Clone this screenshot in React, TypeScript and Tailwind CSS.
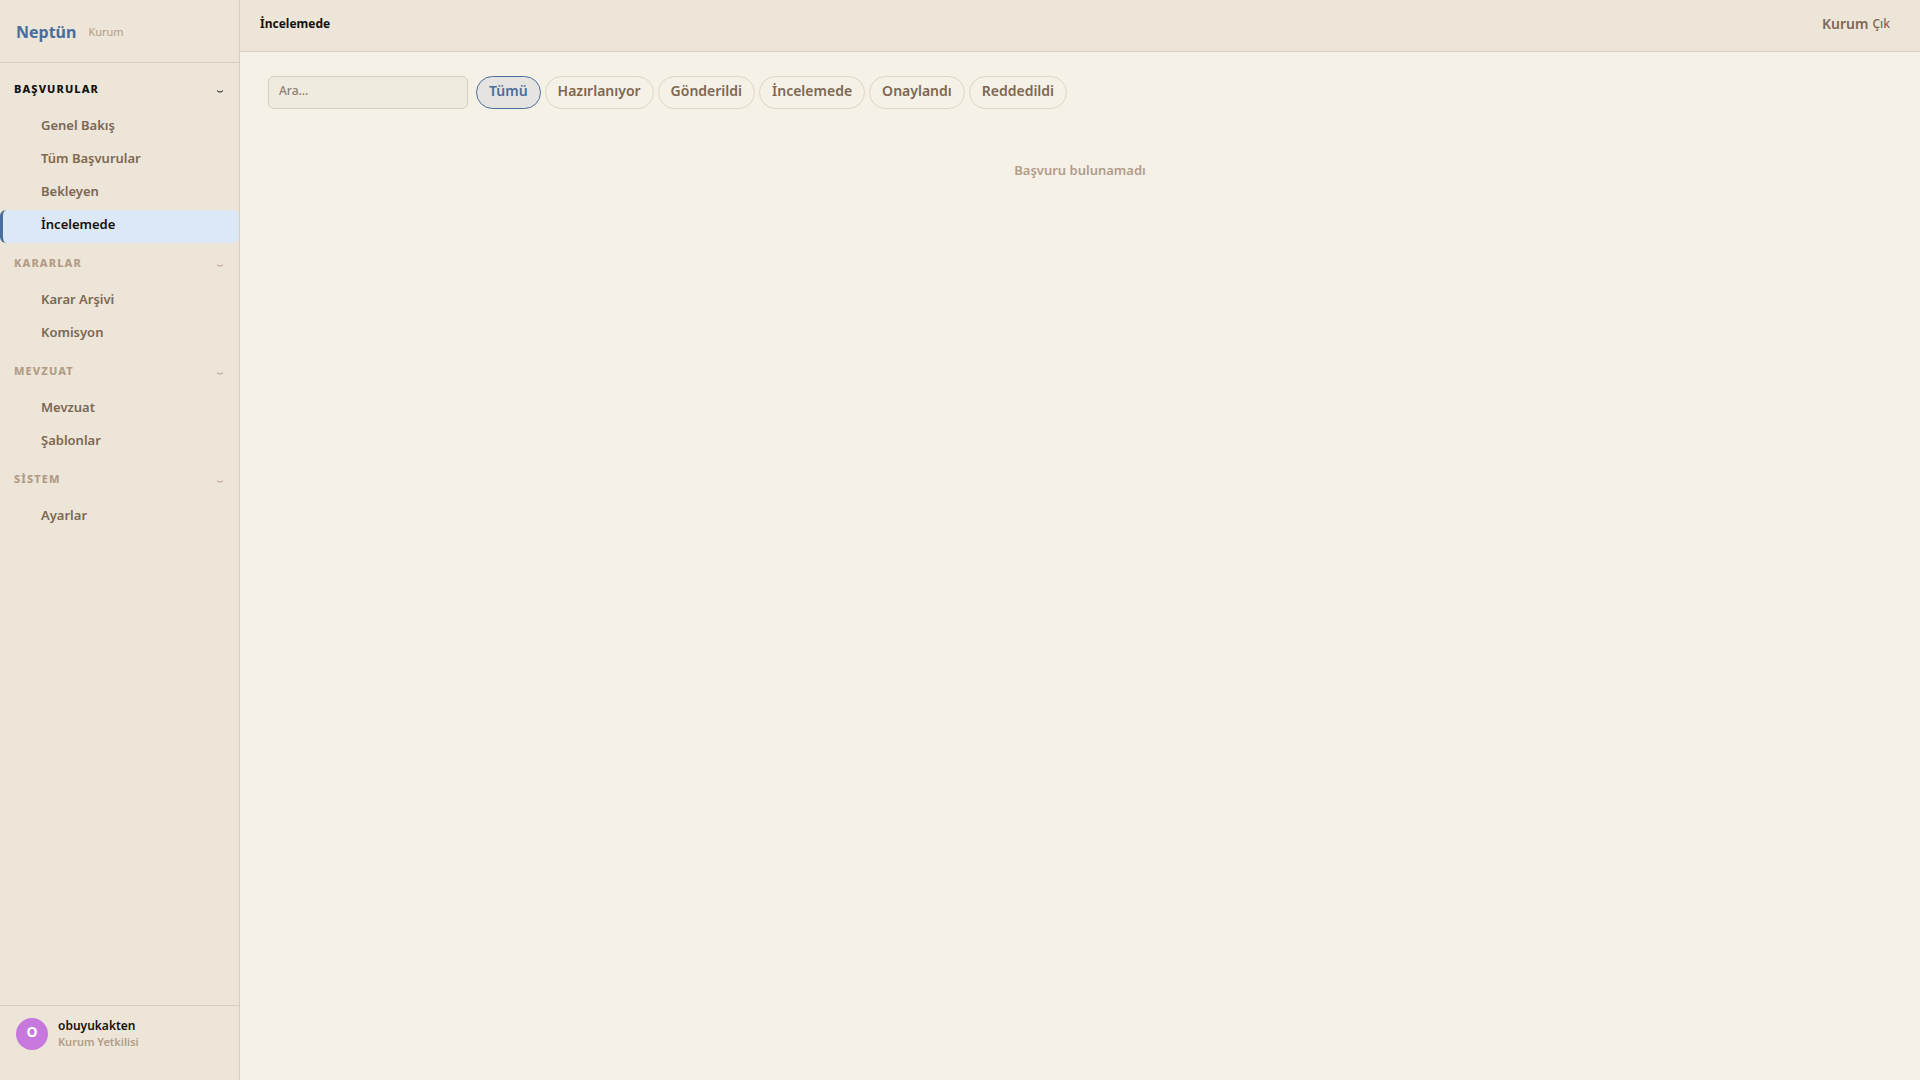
import React from 'react'

const sections = [
    { title: 'BAŞVURULAR', items: ['Genel Bakış', 'Tüm Başvurular', 'Bekleyen', 'İncelemede'] },
    { title: 'KARARLAR', items: ['Karar Arşivi', 'Komisyon'] },
    { title: 'MEVZUAT', items: ['Mevzuat', 'Şablonlar'] },
    { title: 'SİSTEM', items: ['Ayarlar'] },
]

const filters = ['Tümü', 'Hazırlanıyor', 'Gönderildi', 'İncelemede', 'Onaylandı', 'Reddedildi']

const active = 'İncelemede'

const Chevron = () => (
    <svg className='w-2 h-2 mt-1' viewBox='0 0 8 8' fill='none' stroke='currentColor' strokeWidth='1' aria-hidden='true'>
        <path d='M1 3.5 Q1.8 5 4 5 Q6.2 5 7 3.5' />
    </svg>
)

const Sidebar = () => {
    return (
        <aside className='flex flex-col w-60 shrink-0 bg-[#ece5d8] border-r border-[#d6cfc0]'>
            <div className='flex items-center gap-3 h-[63px] px-4 pt-0.5 border-b border-[#d6cfc0]'>
                <span className='text-base font-bold text-[#4a6d9c]'>Neptün</span>
                <span className='text-[11px] text-[#b39c86]'>Kurum</span>
            </div>
            <nav className='flex-1 pt-1.5'>
                {sections.map((section) => {
                    const open = section.items.includes(active)
                    return (
                        <div key={section.title}>
                            <button className={`flex justify-between items-center w-full h-[42px] pl-3.5 pr-[15px] pb-0.5 text-[11px] font-extrabold tracking-widest ${open ? 'text-[#15110c]' : 'text-[#b39c86]'}`}>
                                {section.title}
                                <Chevron />
                            </button>
                            {section.items.map((item) => (
                                <a
                                    key={item}
                                    href='#'
                                    className={`flex items-center h-[33px] pl-[38px] pb-1 border-l-3 rounded-md text-[13px] font-semibold ${item === active ? 'border-[#4a6d9c] bg-[#dce8f5] text-[#15110c]' : 'border-transparent text-[#7d6752]'}`}
                                >
                                    {item}
                                </a>
                            ))}
                        </div>
                    )
                })}
            </nav>
            <div className='flex items-start gap-2.5 h-[75px] px-4 pt-3 border-t border-[#d6cfc0]'>
                <div className='flex justify-center items-center size-8 pb-1 rounded-full bg-[#c678dd] text-sm font-bold text-white'>O</div>
                <div className='flex flex-col'>
                    <span className='text-xs leading-4 font-semibold text-[#15110c]'>obuyukakten</span>
                    <span className='text-[11px] leading-4 font-semibold text-[#b39c86]'>Kurum Yetkilisi</span>
                </div>
            </div>
        </aside>
    )
}

const App = () => {
    return (
        <div className="flex min-h-screen bg-[#f6f1e6] font-['Noto_Sans',sans-serif]">
            <Sidebar />
            <div className='flex-1 flex flex-col'>
                <header className='flex justify-between items-center h-[52px] pl-5 pr-[30px] pb-1 bg-[#ece5d8] border-b border-[#d6cfc0]'>
                    <h1 className='text-xs font-bold text-[#15110c]'>İncelemede</h1>
                    <div className='flex items-center gap-1 text-[#7d6752]'>
                        <span className='text-sm font-semibold'>Kurum</span>
                        <button className='text-xs font-medium'>Çık</button>
                    </div>
                </header>
                <main className='px-7 py-6'>
                    <div className='flex items-center gap-2'>
                        <input
                            type='text'
                            aria-label='Ara'
                            placeholder='Ara...'
                            className='w-[200px] h-[33px] px-2.5 pb-1 rounded-md border border-[#d6cfc0] bg-[#efebdf] text-xs font-medium text-[#15110c] placeholder:text-[#8c8172] outline-none'
                        />
                        <div className='flex gap-1'>
                            {filters.map((filter, i) => (
                                <button
                                    key={filter}
                                    className={`flex items-center h-[33px] px-3 pb-1 rounded-full border text-sm font-semibold ${i === 0 ? 'border-[#4a6d9c] bg-[#e5e4e0] text-[#4a6d9c]' : 'border-[#ddd4c5] text-[#7d6752]'}`}
                                >
                                    {filter}
                                </button>
                            ))}
                        </div>
                    </div>
                    <p className='pt-[51px] text-center text-[13px] leading-5 font-semibold text-[#b39c86]'>Başvuru bulunamadı</p>
                </main>
            </div>
        </div>
    )
}

export default App
